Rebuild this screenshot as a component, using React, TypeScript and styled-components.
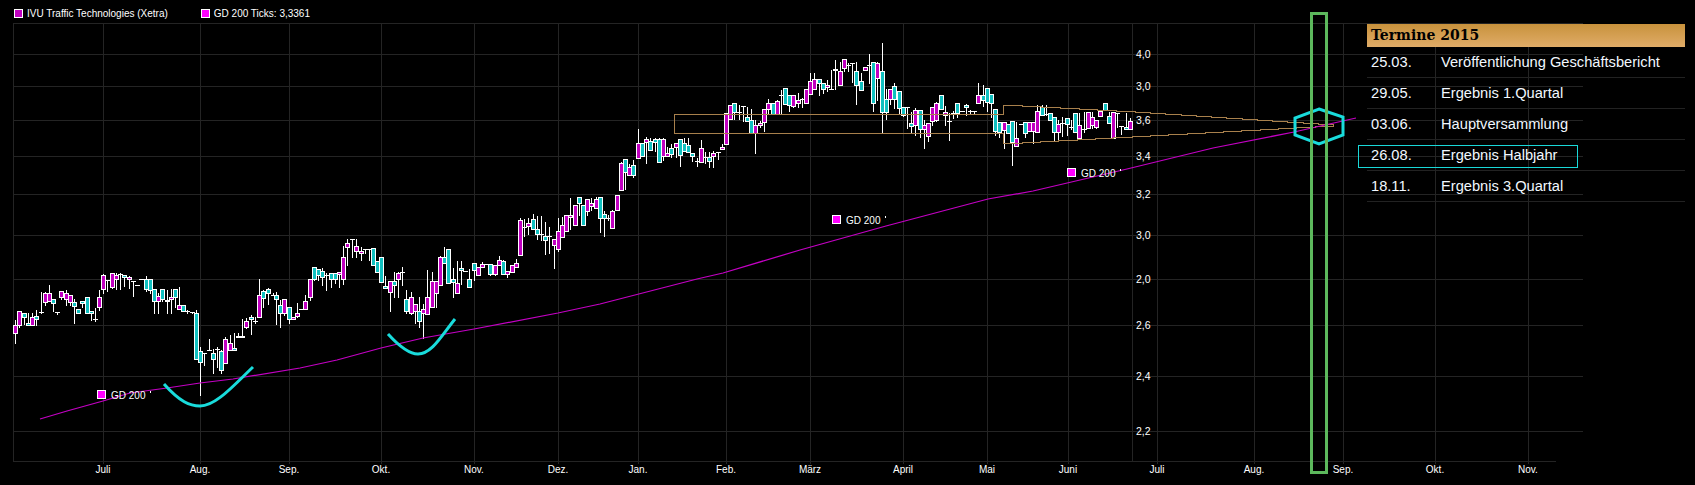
import React from 'react';
import styled, { createGlobalStyle } from 'styled-components';

type Kind = 'm' | 'c' | 'd';
// x, body top, body bottom, wick top, wick bottom, kind (m = falling, c = rising, d = doji)
type Row = [number, number, number, number, number, Kind];
type Candle = { x: number; top: number; bottom: number; wickTop: number; wickBottom: number; kind: Kind };

const segment = (originX: number, originY: number, rows: Row[]): Candle[] =>
  rows.map(([x, t, b, wt, wb, kind]) => ({
    x: Math.round(originX + x / 3),
    top: Math.round(originY + t / 3),
    bottom: Math.round(originY + b / 3),
    wickTop: Math.round(originY + wt / 3),
    wickBottom: Math.round(originY + wb / 3),
    kind,
  }));

const candles: Candle[] = [
  ...segment(0, 260, [
    [46, 196, 220, 180, 248, 'm'], [58, 154, 196, 154, 200, 'm'], [72, 160, 170, 158, 192, 'c'], [85, 190, 196, 160, 196, 'c'],
    [97, 172, 196, 160, 196, 'm'], [109, 168, 176, 150, 196, 'c'], [122, 155, 155, 96, 160, 'd'], [135, 98, 127, 96, 134, 'm'],
    [148, 98, 124, 75, 124, 'm'], [160, 118, 128, 118, 152, 'c'], [172, 155, 155, 155, 162, 'd'], [184, 94, 112, 94, 116, 'm'],
    [199, 100, 118, 90, 134, 'm'], [211, 106, 127, 106, 135, 'm'], [223, 127, 139, 118, 188, 'c'], [235, 148, 160, 148, 160, 'c'],
    [247, 124, 130, 124, 140, 'c'], [262, 112, 160, 112, 160, 'c'], [274, 154, 160, 154, 180, 'c'], [286, 178, 178, 145, 182, 'd'],
    [298, 112, 140, 90, 150, 'm'], [310, 46, 86, 42, 98, 'm'], [322, 60, 60, 60, 92, 'd'], [337, 40, 82, 40, 84, 'm'],
    [349, 44, 58, 40, 86, 'm'], [361, 42, 42, 40, 86, 'd'], [373, 44, 52, 44, 78, 'c'], [388, 50, 58, 48, 84, 'm'],
    [400, 64, 64, 64, 108, 'd'], [412, 76, 76, 76, 76, 'd'], [424, 58, 58, 58, 58, 'd'], [438, 58, 88, 48, 92, 'c'],
    [451, 56, 90, 56, 100, 'c'], [463, 86, 124, 86, 160, 'c'], [475, 108, 122, 98, 160, 'm'], [487, 86, 118, 86, 124, 'c'],
    [502, 120, 124, 90, 160, 'm'], [514, 112, 118, 86, 160, 'm'], [526, 86, 112, 86, 140, 'c'], [538, 134, 148, 82, 148, 'm'],
    [550, 134, 154, 134, 154, 'c'], [562, 154, 154, 150, 160, 'd'], [576, 156, 156, 156, 160, 'd'], [589, 160, 296, 150, 296, 'c'],
    [601, 272, 306, 262, 404, 'c'], [613, 280, 280, 280, 316, 'd'], [627, 271, 271, 238, 271, 'd'], [640, 278, 296, 266, 340, 'c'],
    [652, 266, 266, 262, 322, 'd'], [664, 272, 330, 270, 340, 'c'], [676, 236, 310, 232, 310, 'm'], [691, 248, 270, 226, 270, 'm'],
    [703, 264, 270, 220, 270, 'c'], [715, 227, 232, 220, 232, 'c'], [727, 227, 232, 178, 232, 'm'], [739, 184, 202, 175, 204, 'm'],
    [753, 170, 176, 166, 222, 'c'], [765, 182, 182, 170, 190, 'd'], [778, 106, 170, 58, 170, 'm'], [790, 92, 114, 90, 140, 'c'],
    [805, 88, 98, 84, 132, 'c'], [818, 106, 106, 100, 106, 'd'], [829, 106, 116, 96, 192, 'c'], [841, 136, 158, 120, 200, 'c'],
    [853, 118, 160, 118, 164, 'm'], [868, 140, 178, 140, 188, 'c'], [880, 170, 178, 170, 178, 'm'], [892, 160, 168, 130, 170, 'm'],
  ]),
  ...segment(300, 220, [
    [4, 267, 267, 267, 267, 'd'], [16, 244, 268, 225, 268, 'm'], [31, 178, 230, 178, 240, 'm'], [43, 142, 178, 142, 180, 'c'],
    [55, 148, 166, 148, 180, 'c'], [67, 152, 170, 145, 196, 'c'], [79, 165, 165, 160, 210, 'd'], [94, 160, 178, 160, 200, 'c'],
    [106, 160, 178, 160, 190, 'c'], [118, 157, 163, 157, 200, 'm'], [130, 110, 176, 78, 192, 'm'], [142, 68, 80, 58, 135, 'm'],
    [157, 58, 58, 58, 110, 'd'], [169, 79, 92, 56, 110, 'm'], [182, 92, 100, 80, 120, 'm'], [194, 87, 87, 86, 100, 'd'],
    [206, 86, 86, 86, 120, 'd'], [220, 85, 136, 85, 136, 'c'], [232, 124, 157, 124, 157, 'c'], [244, 110, 187, 110, 187, 'c'],
    [256, 197, 205, 168, 205, 'c'], [271, 182, 217, 182, 272, 'm'], [283, 182, 196, 156, 230, 'c'], [295, 158, 178, 156, 230, 'm'],
    [307, 157, 157, 142, 196, 'd'], [319, 236, 274, 210, 280, 'c'], [334, 232, 280, 215, 282, 'm'], [346, 252, 274, 252, 310, 'm'],
    [358, 274, 302, 232, 320, 'c'], [370, 268, 280, 252, 354, 'm'], [382, 230, 283, 150, 283, 'm'], [397, 184, 262, 155, 262, 'm'],
    [409, 184, 220, 184, 260, 'm'], [421, 110, 196, 108, 196, 'm'], [433, 112, 130, 82, 130, 'c'], [445, 86, 190, 86, 190, 'c'],
    [460, 178, 186, 145, 230, 'c'], [472, 188, 220, 124, 220, 'm'], [484, 145, 151, 124, 192, 'c'], [496, 152, 152, 152, 152, 'd'],
    [508, 178, 202, 148, 202, 'c'], [523, 130, 151, 130, 180, 'c'], [535, 140, 166, 140, 166, 'm'], [547, 131, 140, 126, 140, 'm'],
    [559, 131, 131, 131, 131, 'd'], [571, 131, 163, 131, 166, 'c'], [586, 136, 163, 136, 166, 'm'], [598, 119, 136, 108, 136, 'm'],
    [610, 122, 163, 120, 163, 'c'], [622, 154, 163, 154, 170, 'm'], [637, 136, 157, 136, 157, 'm'], [649, 130, 142, 118, 142, 'm'],
  ]),
  ...segment(500, 120, [
    [61, 300, 404, 295, 404, 'm'], [73, 320, 320, 296, 348, 'd'], [85, 308, 317, 295, 342, 'm'], [100, 298, 328, 282, 328, 'c'],
    [112, 328, 341, 288, 356, 'c'], [124, 343, 343, 288, 360, 'd'], [136, 347, 359, 306, 402, 'c'], [148, 349, 349, 322, 398, 'd'],
    [163, 358, 374, 358, 444, 'm'], [175, 332, 386, 294, 392, 'm'], [187, 316, 352, 292, 352, 'm'], [199, 284, 334, 284, 334, 'm'],
    [211, 286, 292, 234, 326, 'm'], [226, 256, 316, 256, 316, 'm'], [238, 232, 248, 232, 286, 'c'], [250, 254, 314, 254, 314, 'c'],
    [262, 236, 274, 236, 284, 'm'], [274, 250, 259, 234, 270, 'm'], [289, 238, 265, 232, 265, 'm'], [301, 232, 295, 232, 336, 'c'],
    [313, 283, 293, 274, 347, 'c'], [325, 293, 293, 286, 300, 'd'], [337, 274, 325, 270, 325, 'm'], [352, 224, 271, 224, 271, 'm'],
    [364, 128, 211, 126, 211, 'm'], [376, 116, 156, 116, 206, 'c'], [388, 140, 166, 132, 166, 'm'], [400, 134, 166, 120, 172, 'c'],
    [415, 68, 115, 26, 115, 'm'], [427, 68, 108, 68, 108, 'c'], [439, 56, 67, 52, 130, 'm'], [451, 62, 91, 54, 91, 'c'],
    [466, 56, 67, 54, 92, 'c'], [478, 56, 127, 54, 127, 'c'], [490, 56, 108, 54, 120, 'm'], [502, 98, 108, 80, 108, 'm'],
    [514, 83, 103, 72, 110, 'c'], [529, 70, 82, 70, 110, 'm'], [541, 56, 106, 56, 138, 'c'], [553, 70, 94, 54, 94, 'c'],
    [565, 76, 97, 54, 97, 'c'], [577, 98, 108, 98, 122, 'c'], [592, 122, 122, 114, 138, 'd'], [604, 83, 127, 60, 127, 'm'],
    [616, 110, 110, 96, 130, 'd'], [628, 110, 122, 96, 140, 'c'], [640, 100, 108, 94, 140, 'm'], [655, 95, 95, 95, 116, 'd'],
    [667, 82, 88, 72, 88, 'm'],
  ]),
  ...segment(715, 80, [
    [34, 100, 192, 100, 192, 'm'], [46, 76, 116, 76, 116, 'm'], [58, 70, 97, 70, 116, 'c'], [72, 96, 96, 75, 118, 'd'],
  ]),
  ...segment(740, 30, [
    [10, 227, 227, 227, 272, 'd'], [22, 262, 272, 232, 272, 'c'], [34, 270, 308, 237, 308, 'c'], [46, 286, 310, 270, 368, 'm'],
    [61, 278, 284, 272, 290, 'm'], [73, 236, 276, 236, 302, 'm'], [85, 220, 236, 208, 250, 'm'], [98, 220, 252, 220, 252, 'c'],
    [112, 212, 252, 210, 252, 'm'], [124, 196, 196, 180, 252, 'd'], [136, 175, 221, 175, 221, 'c'], [148, 194, 224, 194, 242, 'c'],
    [160, 196, 229, 196, 232, 'm'], [175, 211, 220, 190, 230, 'm'], [187, 208, 208, 204, 232, 'd'], [199, 178, 220, 178, 220, 'm'],
    [211, 152, 193, 128, 193, 'm'], [223, 146, 178, 128, 178, 'm'], [238, 148, 160, 148, 194, 'c'], [250, 160, 178, 160, 190, 'c'],
    [262, 164, 170, 150, 182, 'm'], [274, 177, 177, 120, 178, 'd'], [286, 116, 121, 90, 176, 'm'], [301, 122, 164, 96, 164, 'm'],
    [313, 86, 115, 86, 124, 'm'], [325, 105, 105, 100, 122, 'd'], [337, 98, 98, 98, 155, 'd'], [349, 124, 166, 96, 222, 'c'],
    [364, 154, 179, 128, 179, 'c'], [376, 110, 121, 110, 121, 'm'], [388, 104, 104, 72, 160, 'd'], [400, 97, 220, 97, 242, 'c'],
    [412, 100, 145, 97, 210, 'm'], [427, 124, 245, 40, 305, 'c'], [439, 208, 245, 178, 266, 'c'], [451, 178, 208, 178, 222, 'm'],
    [463, 169, 208, 160, 235, 'c'], [478, 184, 235, 184, 248, 'c'], [490, 230, 256, 230, 258, 'c'], [502, 230, 230, 230, 293, 'd'],
    [514, 278, 287, 246, 305, 'c'], [526, 241, 286, 234, 315, 'm'], [541, 241, 298, 241, 322, 'c'], [553, 286, 298, 270, 353, 'm'],
    [565, 278, 319, 278, 332, 'm'], [577, 232, 274, 232, 284, 'm'], [589, 220, 271, 216, 272, 'm'], [604, 196, 236, 196, 236, 'c'],
    [616, 247, 256, 228, 285, 'm'], [628, 274, 274, 248, 330, 'd'], [640, 248, 253, 244, 264, 'm'], [652, 220, 250, 220, 262, 'c'],
    [667, 244, 244, 244, 244, 'd'], [679, 226, 232, 222, 256, 'c'], [691, 243, 243, 240, 248, 'd'], [703, 244, 244, 244, 248, 'd'],
    [715, 194, 220, 160, 220, 'm'], [730, 196, 209, 166, 228, 'c'], [742, 175, 216, 175, 244, 'c'], [754, 193, 220, 193, 260, 'c'],
    [766, 238, 304, 238, 314, 'c'], [778, 277, 307, 277, 320, 'c'], [793, 277, 299, 277, 354, 'm'], [805, 283, 310, 283, 310, 'c'],
    [817, 272, 337, 272, 404, 'c'], [829, 325, 349, 277, 349, 'm'], [843, 283, 283, 283, 283, 'd'], [856, 277, 310, 277, 320, 'c'],
    [868, 277, 304, 277, 304, 'm'], [880, 277, 304, 277, 338, 'm'], [892, 244, 306, 226, 306, 'm'],
  ]),
  ...segment(960, 70, [
    [246, 110, 136, 105, 136, 'c'], [258, 131, 131, 105, 136, 'd'], [271, 130, 150, 130, 150, 'c'], [283, 142, 185, 142, 210, 'c'],
    [295, 163, 187, 150, 212, 'm'], [307, 160, 160, 142, 198, 'd'], [322, 145, 162, 145, 195, 'c'], [334, 170, 170, 150, 176, 'd'],
    [346, 130, 185, 130, 185, 'c'], [358, 165, 205, 130, 205, 'm'], [373, 177, 177, 126, 185, 'd'], [385, 127, 175, 127, 175, 'm'],
    [397, 142, 165, 126, 175, 'm'], [409, 150, 172, 150, 175, 'm'], [421, 122, 139, 122, 139, 'm'], [436, 100, 120, 100, 120, 'c'],
    [448, 137, 160, 125, 160, 'c'], [460, 127, 205, 127, 205, 'm'], [472, 130, 130, 130, 170, 'd'], [484, 168, 168, 168, 192, 'd'],
    [499, 171, 178, 128, 178, 'c'], [511, 152, 178, 145, 178, 'm'],
  ]),
];

const verticals = [103, 200, 289, 381, 474, 558, 638, 726, 810, 903, 987, 1068, 1157, 1254, 1343, 1435, 1528];
const horizontals = [23, 54, 86, 120, 156, 194, 235, 279, 325, 376, 431];

const months: [string, number][] = [
  ['Juli', 103], ['Aug.', 200], ['Sep.', 289], ['Okt.', 381], ['Nov.', 474], ['Dez.', 558], ['Jan.', 638], ['Feb.', 726], ['März', 810],
  ['April', 903], ['Mai', 987], ['Juni', 1068], ['Juli', 1157], ['Aug.', 1254], ['Sep.', 1343], ['Okt.', 1435], ['Nov.', 1528],
];

const prices: [string, number][] = [
  ['4,0', 54], ['3,0', 86], ['3,6', 120], ['3,4', 156], ['3,2', 194], ['3,0', 235], ['2,0', 279], ['2,6', 325], ['2,4', 376], ['2,2', 431],
];

const averageLine =
  '40,419 67,411 103,401 130,393 167,388 200,383 233,379 300,368 337,360 381,348 423,338 474,329 558,313 600,304 697,279 723,273 800,250 886,226 988,199 1033,191 1127,169 1213,148 1294,132 1356,118';

// the band edges fall by one pixel at a time, so they are drawn as a staircase
const stair = (x0: number, y0: number, x1: number, y1: number) => {
  const steps = Math.abs(y1 - y0);
  const dir = y1 > y0 ? 1 : -1;
  let d = '';
  for (let i = 1; i <= steps; i++) {
    d += ` H${Math.round(x0 + ((x1 - x0) * i) / steps)} V${y0 + dir * i}`;
  }
  return d;
};

const upperBand = `M674 133.5 V114.5 H1003.5 V105.5${stair(1003.5, 105.5, 1135, 112.5)}${stair(1135, 112.5, 1333, 125.5)}`;
const lowerBand = `M674 133.5 H1003.5 V143.5${stair(1003.5, 143.5, 1333, 125.5)}`;

const markers = [
  { x: 97, y: 390 },
  { x: 832, y: 215 },
  { x: 1067, y: 168 },
];

const events = [
  { date: '25.03.', title: 'Veröffentlichung Geschäftsbericht' },
  { date: '29.05.', title: 'Ergebnis 1.Quartal' },
  { date: '03.06.', title: 'Hauptversammlung' },
  { date: '26.08.', title: 'Ergebnis Halbjahr', active: true },
  { date: '18.11.', title: 'Ergebnis 3.Quartal' },
];

const App = () => {
  return (
    <>
      <GlobalStyle />
      <Page>
        <Legend>
          <LegendItem>
            <Swatch $color="#c000c0" />
            IVU Traffic Technologies (Xetra)
          </LegendItem>
          <LegendItem>
            <Swatch $color="#ff00ff" />
            GD 200 Ticks: 3,3361
          </LegendItem>
        </Legend>

        <Chart viewBox="0 23 1695 462" width={1695} height={462}>
          <g shapeRendering="crispEdges">
            {horizontals.map((y) => (
              <GridLine key={y} x1={13} x2={1583} y1={y + 0.5} y2={y + 0.5} />
            ))}
            <GridLine x1={13} x2={1556} y1={461.5} y2={461.5} />
            <GridLine x1={13.5} x2={13.5} y1={23} y2={461} />
            <GridLine x1={1132.5} x2={1132.5} y1={23} y2={461} />
            {verticals.map((x) => (
              <GridLine key={x} x1={x + 0.5} x2={x + 0.5} y1={23} y2={464} />
            ))}
          </g>

          {prices.map(([label, y]) => (
            <PriceLabel key={y} x={1136} y={y + 4}>
              {label}
            </PriceLabel>
          ))}
          {months.map(([label, x], i) => (
            <AxisLabel key={i} x={x} y={473} textAnchor="middle">
              {label}
            </AxisLabel>
          ))}

          <g shapeRendering="crispEdges">
            {candles.map((c, i) => (
              <g key={i}>
                <Wick x1={c.x + 0.5} x2={c.x + 0.5} y1={c.wickTop} y2={c.wickBottom + 1} />
                {c.kind === 'd' ? (
                  <Wick x1={c.x - 2} x2={c.x + 3} y1={c.top + 0.5} y2={c.top + 0.5} />
                ) : (
                  <Body x={c.x - 1.5} y={c.top + 0.5} width={4} height={c.bottom - c.top} $kind={c.kind} />
                )}
              </g>
            ))}
            <Band d={upperBand} />
            <Band d={lowerBand} />
          </g>

          <Average points={averageLine} />

          {markers.map((m) => (
            <g key={m.x}>
              <Marker x={m.x + 0.5} y={m.y + 0.5} width={8} height={8} shapeRendering="crispEdges" />
              <AxisLabel x={m.x + 14} y={m.y + 9}>
                GD 200
              </AxisLabel>
              <Wick x1={m.x + 53.5} x2={m.x + 53.5} y1={m.y + 1} y2={m.y + 3} shapeRendering="crispEdges" />
            </g>
          ))}

          <Sketch d="M164 384 C180 402 190 406 200 406 C216 406 234 385 253 367" />
          <Sketch d="M388 334 C398 345 408 354 418 354 C432 354 442 335 455 319" />
          <Sketch d="M1319 109 L1343 117 V135 L1319 144 L1295 135 V118 Z" />
          <Target x={1311.5} y={13.5} width={15} height={459} />
        </Chart>

        <Panel>
          <PanelTitle>Termine 2015</PanelTitle>
          {events.map((e) => (
            <EventRow key={e.date} $active={e.active}>
              <span>{e.date}</span>
              <span>{e.title}</span>
            </EventRow>
          ))}
        </Panel>
      </Page>
    </>
  );
};

const GlobalStyle = createGlobalStyle`
  html, body {
    margin: 0;
    padding: 0;
    background: #000;
    overflow: hidden;
  }
`;

const Page = styled.div`
  position: relative;
  width: 1695px;
  height: 485px;
  background: #000;
  font-family: "Liberation Sans", Arial, sans-serif;
  color: #fff;
`;

const Legend = styled.div`
  display: flex;
  gap: 33px;
  height: 23px;
  padding: 8px 0 0 14px;
  box-sizing: border-box;
`;

const LegendItem = styled.div`
  display: flex;
  align-items: center;
  gap: 4px;
  height: 11px;
  font-size: 10px;
  white-space: nowrap;
`;

const Swatch = styled.i<{ $color: string }>`
  width: 7px;
  height: 7px;
  border: 1px solid #fff;
  background: ${(p) => p.$color};
`;

const Chart = styled.svg`
  display: block;
  overflow: visible;
`;

const GridLine = styled.line`
  stroke: #242424;
  stroke-width: 1;
`;

const AxisLabel = styled.text`
  fill: #fff;
  font-family: "Liberation Sans", Arial, sans-serif;
  font-size: 10px;
`;

const PriceLabel = styled(AxisLabel)`
  font-size: 10.5px;
`;

const Wick = styled.line`
  stroke: #fff;
  stroke-width: 1;
`;

const Body = styled.rect<{ $kind: Kind }>`
  stroke: #fff;
  stroke-width: 1;
  fill: ${(p) => (p.$kind === 'm' ? '#c000c0' : '#10c0c0')};
`;

const Band = styled.path`
  fill: none;
  stroke: #a8804c;
  stroke-width: 1;
`;

const Average = styled.polyline`
  fill: none;
  stroke: #c400c4;
  stroke-width: 1.25;
`;

const Marker = styled.rect`
  fill: #ff00ff;
  stroke: #fff;
  stroke-width: 1;
`;

const Sketch = styled.path`
  fill: none;
  stroke: #19dcdc;
  stroke-width: 3;
`;

const Target = styled.rect`
  fill: none;
  stroke: #5cb85c;
  stroke-width: 3;
`;

const Panel = styled.div`
  position: absolute;
  top: 24px;
  left: 1367px;
  width: 318px;
`;

const PanelTitle = styled.div`
  height: 23px;
  padding-left: 4px;
  background: linear-gradient(#c8923c, #e0ac68);
  color: #000;
  font-family: "DejaVu Serif", "Liberation Serif", serif;
  font-size: 14px;
  font-weight: bold;
  line-height: 23px;
`;

const EventRow = styled.div<{ $active?: boolean }>`
  position: relative;
  display: grid;
  grid-template-columns: 70px 1fr;
  align-items: center;
  box-sizing: border-box;
  height: 31px;
  padding-left: 4px;
  border-bottom: 1px solid #222;
  color: #f2f8ff;
  font-size: 14.67px;

  ${(p) =>
    p.$active &&
    `
    &::after {
      content: "";
      position: absolute;
      top: 5px;
      left: -9px;
      width: 218px;
      height: 21px;
      border: 1px solid #19d8d8;
    }
  `}
`;

export default App;
